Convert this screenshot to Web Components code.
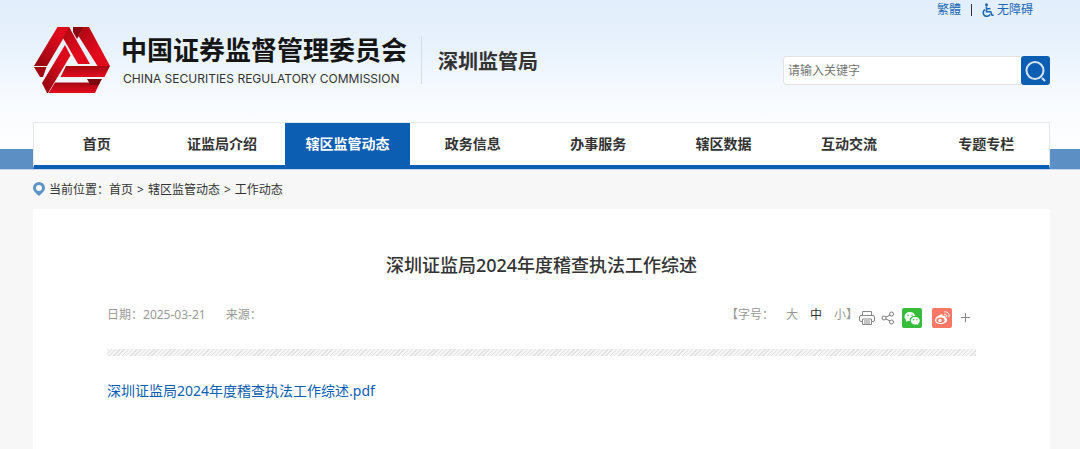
<!DOCTYPE html>
<html lang="zh-CN">
<head>
<meta charset="utf-8">
<title>深圳证监局2024年度稽查执法工作综述</title>
<style>
  body {
    margin: 0;
    min-height: 100vh;
    background: #f7f7f7;
    color: #333;
    font: 12px/18px "Noto Sans", "Noto Sans CJK SC", sans-serif;
  }
</style>
</head>
<body>
<csrc-header>
  <site-logo slot="logo"></site-logo>
  <top-links slot="links"></top-links>
  <search-box slot="search"></search-box>
  <main-nav slot="nav" current="2"></main-nav>
</csrc-header>
<main>
  <bread-crumb></bread-crumb>
  <article-detail>
    <h1 slot="title">深圳证监局2024年度稽查执法工作综述</h1>
    <span slot="date">2025-03-21</span>
    <share-tools slot="tools"></share-tools>
    <a slot="content" href="#">深圳证监局2024年度稽查执法工作综述.pdf</a>
  </article-detail>
</main>

<script>
// header
class CsrcHeader extends HTMLElement {
  constructor() {
    super();
    this.attachShadow({ mode: 'open' }).innerHTML = `
      <style>
        :host {
          display: block;
          box-sizing: border-box;
          padding: 0 30px 0 33px;
          border-bottom: 1px solid #c3d8ec;
          background:
            linear-gradient(#5c8fc4, #5c8fc4) bottom / 100% 20px no-repeat,
            linear-gradient(#e2eefb 0, #e6f1fc 40px, #f8fbff 100px, #fefeff 149px);
        }
        .top { display: flex; justify-content: flex-end; height: 20px; padding-right: 17px; }
        .middle { display: flex; align-items: flex-start; justify-content: space-between; height: 102px; }
        .search { padding-top: 36px; }
      </style>
      <div class="top"><slot name="links"></slot></div>
      <div class="middle">
        <slot name="logo"></slot>
        <div class="search"><slot name="search"></slot></div>
      </div>
      <slot name="nav"></slot>
    `;
  }
}
customElements.define('csrc-header', CsrcHeader);

// logo with the name of the commission and of the bureau
class SiteLogo extends HTMLElement {
  constructor() {
    super();
    this.attachShadow({ mode: 'open' }).innerHTML = `
      <style>
        :host { display: flex; align-items: flex-start; padding-top: 6px; }
        svg { display: block; width: 78px; height: 68px; }
        .names { margin: 8px 0 0 10px; color: #151515; }
        .cn { font-size: 26px; line-height: 32px; font-weight: 700; }
        .en { padding: 5px 0 0 2px; font: 12px/16px Inter, sans-serif; color: #333; }
        .bureau {
          margin: 10px 0 0 14px;
          padding: 4px 0 0 16px;
          border-left: 1px solid #d5dde6;
          font-size: 20px;
          line-height: 44px;
          font-weight: 700;
        }
      </style>
      <svg viewBox="0 0 78 68" aria-hidden="true">
        <defs>
          <linearGradient id="left" x1="1" y1="0" x2="0" y2="1">
            <stop offset="0.3" stop-color="#dd0a1c"/><stop offset="1" stop-color="#8d0710"/>
          </linearGradient>
          <linearGradient id="mid" x1="0" y1="0" x2="1" y2="1">
            <stop offset="0" stop-color="#a80812"/><stop offset="0.6" stop-color="#e00a1c"/>
          </linearGradient>
          <linearGradient id="low" x1="0" y1="0" x2="0" y2="1">
            <stop offset="0" stop-color="#a50812"/><stop offset="1" stop-color="#e30c1e"/>
          </linearGradient>
        </defs>
        <path fill="url(#left)" d="M24.5 1H36l2 3-8 9-16 27H1z"/>
        <path fill="url(#mid)" d="M36 1 57 38H45L30 12z"/>
        <path fill="#8d0710" d="M40 1h11l-7 12-4-7z"/>
        <path fill="url(#mid)" d="M50.5 1H56l21 39H64.5L45.5 10z"/>
        <path fill="#a30812" d="M1 41h12.5L10 51H7z"/>
        <path fill="url(#low)" d="M33 40h44l-5.5 11h-44z"/>
        <path fill="url(#left)" d="m32 19 5.5 10.5L15 67h-1l-5-10z"/>
        <path fill="url(#low)" d="M22 56.5h45L62 67H15.5z"/>
        <path fill="#7c060e" d="M54 53h15l-3.5 6h-8z"/>
      </svg>
      <div class="names">
        <div class="cn">中国证券监督管理委员会</div>
        <div class="en">CHINA SECURITIES REGULATORY COMMISSION</div>
      </div>
      <div class="bureau">深圳监管局</div>
    `;
  }
}
customElements.define('site-logo', SiteLogo);

class TopLinks extends HTMLElement {
  constructor() {
    super();
    this.attachShadow({ mode: 'open' }).innerHTML = `
      <style>
        :host { display: flex; align-items: center; gap: 10px; }
        a { display: flex; align-items: center; gap: 3px; color: #1f69b3; text-decoration: none; }
        i { width: 1px; height: 12px; background: #333; }
        svg { width: 12px; height: 14px; }
      </style>
      <a href="#">繁體</a>
      <i></i>
      <a href="#">
        <svg viewBox="0 0 12 14" fill="none" stroke="#1f69b3" stroke-width="1.6" aria-hidden="true">
          <circle cx="4.5" cy="1.7" r="1.5" fill="#1f69b3" stroke="none"/>
          <path d="M4.5 3.5v5.3h4.2l1.3 3.5h1.6M4.5 5.8h4M3 6.6a3.6 3.6 0 1 0 5 4.8"/>
        </svg>
        无障碍
      </a>
    `;
  }
}
customElements.define('top-links', TopLinks);

class SearchBox extends HTMLElement {
  constructor() {
    super();
    this.attachShadow({ mode: 'open' }).innerHTML = `
      <style>
        :host { display: block; }
        form { display: flex; margin: 0; }
        input {
          box-sizing: border-box;
          width: 238px;
          height: 29px;
          padding: 0 4px;
          border: 1px solid #e3e3e3;
          border-right: 0;
          border-radius: 4px 0 0 4px;
          background: #fff;
          font: inherit;
          outline: none;
        }
        input::placeholder { color: #757575; }
        button {
          width: 29px;
          height: 29px;
          padding: 0;
          border: 0;
          border-radius: 3px;
          background: #0c5eb3;
        }
        svg { display: block; width: 29px; height: 29px; }
      </style>
      <form>
        <input type="text" placeholder="请输入关键字" aria-label="请输入关键字">
        <button type="button" aria-label="搜索">
          <svg viewBox="0 0 29 29" fill="none" stroke="#d5e4f3" stroke-width="2" stroke-linecap="round">
            <circle cx="14" cy="14.5" r="8.5"/>
            <path d="m21.5 22.5 2 2"/>
          </svg>
        </button>
      </form>
    `;
  }
}
customElements.define('search-box', SearchBox);

class MainNav extends HTMLElement {
  constructor() {
    super();
    this.attachShadow({ mode: 'open' });
  }

  connectedCallback() {
    const items = ['首页', '证监局介绍', '辖区监管动态', '政务信息', '办事服务', '辖区数据', '互动交流', '专题专栏'];
    const current = Number(this.getAttribute('current'));
    this.shadowRoot.innerHTML = `
      <style>
        :host { display: block; }
        nav {
          display: flex;
          border: 1px solid #e3e6ea;
          border-bottom: 4px solid #0c5eb3;
          background: #fff;
        }
        a {
          flex: 1;
          font-size: 14px;
          line-height: 42px;
          font-weight: 700;
          color: #333;
          text-align: center;
          text-decoration: none;
        }
        a:last-child { margin-left: 12px; }
        a.on { background: #0c5eb3; color: #fff; }
      </style>
      <nav>${items.map((text, i) => `<a href="#"${i === current ? ' class="on"' : ''}>${text}</a>`).join('')}</nav>
    `;
  }
}
customElements.define('main-nav', MainNav);

class BreadCrumb extends HTMLElement {
  constructor() {
    super();
    this.attachShadow({ mode: 'open' }).innerHTML = `
      <style>
        :host { display: flex; align-items: center; height: 39px; padding: 0 33px; }
        svg { width: 12px; height: 14px; margin: 0 4px 2px 0; }
        nav { display: flex; gap: 4px; }
        a { color: #333; text-decoration: none; }
      </style>
      <svg viewBox="0 0 12 14" aria-hidden="true">
        <path fill="#5c93c6" fill-rule="evenodd" d="M6 0a6 6 0 0 1 6 6c0 3-3 5-6 8-3-3-6-5-6-8a6 6 0 0 1 6-6zm0 3a3 3 0 1 0 0 6 3 3 0 0 0 0-6z"/>
      </svg>
      <span>当前位置：</span>
      <nav>
        <a href="#">首页</a><span>&gt;</span>
        <a href="#">辖区监管动态</a><span>&gt;</span>
        <a href="#">工作动态</a>
      </nav>
    `;
  }
}
customElements.define('bread-crumb', BreadCrumb);

// article page
class ArticleDetail extends HTMLElement {
  constructor() {
    super();
    this.attachShadow({ mode: 'open' }).innerHTML = `
      <style>
        :host {
          display: block;
          box-sizing: border-box;
          min-height: 240px;
          margin: 0 30px 0 33px;
          padding: 42px 74px 40px;
          background: #fff;
        }
        ::slotted(h1) { margin: 0; font-size: 18px; line-height: 28px; font-weight: 500; text-align: center; }
        .info { display: flex; justify-content: space-between; height: 28px; margin-top: 27px; color: #999; }
        .info p { margin: 0; }
        .source { margin-left: 20px; }
        .line {
          height: 7px;
          margin: 15px 0 23px;
          background: repeating-linear-gradient(135deg, #e2e2e2 0 1px, #f5f5f5 1px 3px);
        }
        ::slotted(a) { font-size: 14px; line-height: 24px; color: #0c5eb3; text-decoration: none; }
      </style>
      <slot name="title"></slot>
      <div class="info">
        <p>日期：<slot name="date"></slot><span class="source">来源：</span></p>
        <slot name="tools"></slot>
      </div>
      <div class="line"></div>
      <slot name="content"></slot>
    `;
  }
}
customElements.define('article-detail', ArticleDetail);

class ShareTools extends HTMLElement {
  constructor() {
    super();
    this.attachShadow({ mode: 'open' }).innerHTML = `
      <style>
        :host { display: flex; align-items: flex-start; padding-right: 2px; }
        .size { display: flex; gap: 12px; margin-right: 1px; }
        .icons { display: flex; align-items: center; gap: 6px; padding-top: 2px; }
        button { padding: 0; border: 0; background: none; color: #999; font: inherit; }
        button.on { color: #333; }
        svg { display: block; }
        .brands { display: flex; gap: 10px; margin-left: 1px; }
      </style>
      <div class="size">
        <span>【字号：</span>
        <button>大</button>
        <button class="on">中</button>
        <span><button>小</button>】</span>
      </div>
      <div class="icons">
        <button aria-label="打印">
          <svg width="16" height="14" viewBox="0 0 16 14" fill="none" stroke="#888">
            <path d="M3.5 4V.5h9V4M3.5 10.5H2A1.5 1.5 0 0 1 .5 9V6A1.5 1.5 0 0 1 2 4.5h12A1.5 1.5 0 0 1 15.5 6v3a1.5 1.5 0 0 1-1.5 1.5h-1.5M3.5 8h9v5.5h-9zM5 10h6M5 12h6"/>
          </svg>
        </button>
        <button aria-label="分享">
          <svg width="14" height="14" viewBox="0 0 14 14" fill="none" stroke="#777">
            <circle cx="3" cy="7" r="2"/><circle cx="10.5" cy="3" r="2"/><circle cx="10.5" cy="11" r="2"/>
            <path d="m5 6 4-2M5 8l4 2"/>
          </svg>
        </button>
        <div class="brands">
          <button aria-label="微信">
            <svg width="20" height="20" viewBox="0 0 20 20">
              <rect width="20" height="20" rx="2" fill="#38bc3e"/>
              <path fill="#fff" d="M8 4c-3.2 0-5.5 2-5.5 4.5 0 1.4.7 2.5 1.8 3.3L3.8 14l2-1.2c.7.2 1.3.3 2 .3-.7-3 1.8-5 5.4-5C12.7 5.6 10.6 4 8 4z"/>
              <path fill="#fff" d="M13.3 9c-2.7 0-4.5 1.7-4.5 3.7s1.8 3.7 4.5 3.7c.5 0 1-.1 1.5-.2l1.6.9-.4-1.4c1-.7 1.7-1.8 1.7-3C17.7 10.7 16 9 13.3 9z"/>
              <g fill="#38bc3e"><circle cx="6" cy="7.2" r=".8"/><circle cx="10" cy="7.2" r=".8"/><circle cx="11.8" cy="11.7" r=".7"/><circle cx="14.9" cy="11.7" r=".7"/></g>
            </svg>
          </button>
          <button aria-label="微博">
            <svg width="20" height="20" viewBox="0 0 20 20">
              <rect width="20" height="20" rx="2" fill="#f87766"/>
              <path fill="#fff" d="M13.5 9.8c.7-1.8-.6-2.6-3-1.7.5-1.7-.4-2.3-2-1.7C5.8 7.3 3 10 3 12.3 3 14.8 5.7 16 8.6 16c3.7 0 6.6-2 6.6-4.1 0-1-.6-1.7-1.7-2.1z"/>
              <ellipse cx="8.5" cy="12.3" rx="4.1" ry="2.7" fill="#f87766"/>
              <circle cx="8" cy="12.5" r="1.7" fill="#fff"/>
              <path fill="none" stroke="#fff" stroke-linecap="round" d="M12.5 6.3c1.6-.3 2.8.8 2.4 2.4M12.5 3.9c3-.5 5.2 1.8 4.5 4.9"/>
            </svg>
          </button>
        </div>
        <button aria-label="更多">
          <svg width="16" height="16" viewBox="0 0 16 16" fill="none" stroke="#888"><path d="M3 7.5h9M7.5 3v9"/></svg>
        </button>
      </div>
    `;
  }
}
customElements.define('share-tools', ShareTools);
</script>
</body>
</html>
